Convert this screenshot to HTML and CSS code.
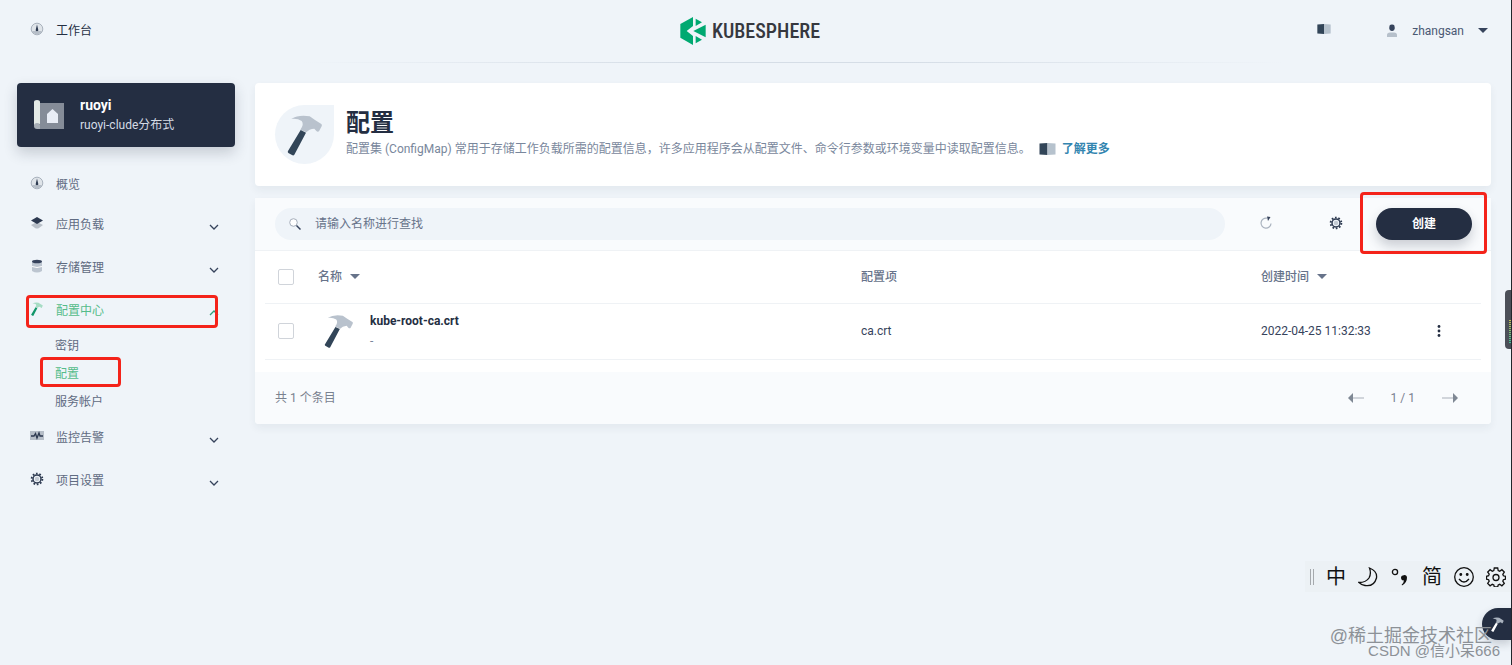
FILE: index.html
```html
<!DOCTYPE html>
<html lang="zh-CN">
<head>
<meta charset="utf-8">
<meta name="viewport" content="width=device-width, initial-scale=1">
<title>配置 - KubeSphere</title>
<link rel="stylesheet" href="styles.css">
</head>
<body>
<svg class="defs" aria-hidden="true">
  <symbol id="hammer" viewBox="0 0 108 124">
    <path class="hammer-head" d="M13 14Q35 0 68 6L84 17L103 29Q106 31 104 36L96 51Q92 54 88 50L82 43Q66 44 58 54L40 46Q52 30 44 20Q32 12 13 14Z"/>
    <path class="hammer-handle" d="M41 47L57 55L22 121Q19 125 15 122L4 116Q1 113 3 110Z"/>
  </symbol>
  <symbol id="gauge" viewBox="0 0 14 14">
    <circle cx="7" cy="7" r="5.8" fill="#dfe4e9" stroke="#a9b2bd" stroke-width="1"/>
    <path d="M2 9a5.500 5.500 0 0 0 10 0z" fill="#b6bec8"/>
    <path d="M7 2.500l1.200 5a1.300 1.300 0 1 1-2.400 0z" fill="#2c3950"/>
  </symbol>
  <symbol id="chevron" viewBox="0 0 10 6">
    <path d="M1 1l4 4 4-4" fill="none" stroke="#36435c" stroke-width="1.300"/>
  </symbol>
  <symbol id="caret" viewBox="0 0 10 5"><path d="M0 0h10L5 5z" fill="currentColor"/></symbol>
  <symbol id="book" viewBox="0 0 16 12">
    <path d="M0 .5L8 0v12l-8-.5z" fill="#324558"/><path d="M8 0l8 .5v11L8 12z" fill="#b6c2cd"/>
  </symbol>
  <symbol id="gear" viewBox="0 0 14 14">
    <circle cx="7" cy="7" r="5.400" fill="none" stroke="#2c3950" stroke-width="1.800" stroke-dasharray="1.697 1.697"/>
    <circle cx="7" cy="7" r="4" fill="#eff4f9" stroke="#2c3950" stroke-width="1.500"/>
    <circle cx="7" cy="7" r="2.200" fill="#c3cad3"/>
  </symbol>
</svg>

<header class="topbar">
  <a class="workbench" href="#"><svg class="nav-icon"><use href="#gauge"/></svg>工作台</a>
  <a class="logo" href="#">
    <svg viewBox="0 0 76 84" aria-hidden="true">
      <path d="M0 21L38 0V27L19 42L38 57V84L0 62Z M46 5L65 16L46 27Z M76 23V61L39 42Z M46 57L65 68L46 79Z" fill="#00a971"/>
    </svg>
    <span>KUBESPHERE</span>
  </a>
  <div class="account">
    <a class="docs" href="#" aria-label="文档"><svg><use href="#book"/></svg></a>
    <button class="user" type="button">
      <svg class="user-icon" viewBox="0 0 12 14"><rect x="3.300" y="0.500" width="5.400" height="6.500" rx="2.400" fill="#36435c"/><path d="M1 13V11Q1 8.500 4 8.500H8Q11 8.500 11 11V13Z" fill="#b6c0cb"/></svg>
      zhangsan
      <svg class="caret"><use href="#caret"/></svg>
    </button>
  </div>
</header>

<div class="layout">
  <aside class="sidebar">
    <a class="project" href="#">
      <svg viewBox="0 0 32 32" aria-hidden="true">
        <path d="M7 4h24v26H7z" fill="#858c98"/><path d="M1 3q0-2 3-2t3 2v22H4q-3 0-3 3z" fill="#e3e9e6"/>
        <path d="M1 27q0-3 3-3t3 2v4H4q-3 0-3-3z" fill="#a7aeb6"/>
        <path d="M14 15l5.500-5L25 15v9H14z" fill="#e9edf6"/>
      </svg>
      <span class="project-text"><strong>ruoyi</strong><span>ruoyi-clude分布式</span></span>
    </a>
    <nav>
      <ul class="menu">
        <li><a class="item first" href="#"><svg class="nav-icon"><use href="#gauge"/></svg>概览</a></li>
        <li><a class="item" href="#"><svg class="nav-icon" viewBox="0 0 14 14"><path d="M1 9l6-3 6 3-4 3q-2 1-4 0z" fill="#b9c0c9"/><path d="M7 1l6 3.500L7 8 1 4.500z" fill="#2c3950"/></svg>应用负载<svg class="chevron"><use href="#chevron"/></svg></a></li>
        <li><a class="item" href="#"><svg class="nav-icon" viewBox="0 0 14 14"><path d="M2 3h10v9q-5 3-10 0z" fill="#bcc5d0"/><path d="M2 7.500q5 2 10 0" fill="none" stroke="#fff"/><ellipse cx="7" cy="2.500" rx="5" ry="1.800" fill="#36435c"/></svg>存储管理<svg class="chevron"><use href="#chevron"/></svg></a></li>
        <li>
          <a class="item active marked" href="#"><svg class="nav-icon"><use href="#hammer"/></svg>配置中心<svg class="chevron" viewBox="0 0 10 6"><path d="M1 5l4-4 4 4" fill="none" stroke="#329f7a" stroke-width="1.300"/></svg></a>
          <ul class="submenu">
            <li><a href="#">密钥</a></li>
            <li><a class="active marked" href="#">配置</a></li>
            <li><a href="#">服务帐户</a></li>
          </ul>
        </li>
        <li><a class="item" href="#"><svg class="nav-icon" viewBox="0 0 14 14"><path d="M0 2h14v9H0z" fill="#b6bec8"/><path d="M1 7h3l1.500-2.500L7 9l2-5 1 3h3" fill="none" stroke="#2c3950" stroke-width="1.300"/></svg>监控告警<svg class="chevron"><use href="#chevron"/></svg></a></li>
        <li><a class="item" href="#"><svg class="nav-icon"><use href="#gear"/></svg>项目设置<svg class="chevron"><use href="#chevron"/></svg></a></li>
      </ul>
    </nav>
  </aside>

  <main class="content">
    <section class="banner card">
      <div class="banner-icon"><svg><use href="#hammer"/></svg></div>
      <div>
        <h1>配置</h1>
        <p>配置集 (ConfigMap) 常用于存储工作负载所需的配置信息，许多应用程序会从配置文件、命令行参数或环境变量中读取配置信息。<a class="more" href="#"><svg><use href="#book"/></svg>了解更多</a></p>
      </div>
    </section>

    <section class="card">
      <div class="toolbar">
        <label class="search">
          <svg viewBox="0 0 12 12" aria-hidden="true"><circle cx="4.500" cy="4.500" r="3.800" fill="#fff" stroke="#a5aebb"/><path d="M7.500 7.500l4 4" stroke="#36435c" stroke-width="1.500"/></svg>
          <input type="text" placeholder="请输入名称进行查找" aria-label="请输入名称进行查找">
        </label>
        <div class="tools">
          <button class="tool" type="button" aria-label="刷新"><svg viewBox="0 0 14 14"><path d="M8 2.200A5 5 0 1 0 12 7.500" fill="none" stroke="#aab3bf" stroke-width="1.200"/><path d="M8 0.500L11.500 1 9 5z" fill="#36435c"/></svg></button>
          <button class="tool" type="button" aria-label="自定义列"><svg><use href="#gear"/></svg></button>
        </div>
        <div class="create-wrap marked"><button class="create" type="button">创建</button></div>
      </div>
      <div class="table-wrap">
        <table>
          <colgroup><col class="c-check"><col class="c-name"><col class="c-config"><col><col class="c-menu"></colgroup>
          <thead>
            <tr>
              <th><input type="checkbox" aria-label="全选"></th>
              <th><button class="sort" type="button">名称<svg class="caret"><use href="#caret"/></svg></button></th>
              <th>配置项</th>
              <th><button class="sort" type="button">创建时间<svg class="caret"><use href="#caret"/></svg></button></th>
              <th></th>
            </tr>
          </thead>
          <tbody>
            <tr>
              <td><input type="checkbox" aria-label="选择 kube-root-ca.crt"></td>
              <td><div class="resource"><svg><use href="#hammer"/></svg><div><a href="#">kube-root-ca.crt</a><span>-</span></div></div></td>
              <td>ca.crt</td>
              <td>2022-04-25 11:32:33</td>
              <td><button class="dots" type="button" aria-label="更多操作"><svg viewBox="0 0 4 12"><circle cx="2" cy="1.500" r="1.400"/><circle cx="2" cy="6" r="1.400"/><circle cx="2" cy="10.500" r="1.400"/></svg></button></td>
            </tr>
          </tbody>
        </table>
      </div>
      <footer class="pager-bar">
        <span>共 1 个条目</span>
        <div class="pager">
          <button type="button" aria-label="上一页"><svg viewBox="0 0 16 10"><path d="M4 5h12" stroke="#c3c9cf" stroke-width="1.500"/><path d="M5 0v10L0 5z" fill="#7f8894"/></svg></button>
          <span>1 / 1</span>
          <button type="button" aria-label="下一页"><svg viewBox="0 0 16 10"><path d="M0 5h12" stroke="#c3c9cf" stroke-width="1.500"/><path d="M11 0v10l5-5z" fill="#7f8894"/></svg></button>
        </div>
      </footer>
    </section>
  </main>
</div>

<div class="meter" aria-hidden="true"><i></i></div>
<button class="toolbox" type="button" aria-label="工具箱"><svg><use href="#hammer"/></svg></button>
<div class="ime">
  <i class="grip"></i>
  <span>中</span>
  <svg viewBox="0 0 20 20"><path d="M11.500 1Q19.500 4 18.500 11Q16 20 7 18.500Q3.500 18 1 15.500Q8 15.500 11 11Q13.500 6.500 11.500 1Z"/></svg>
  <svg viewBox="0 0 20 20"><circle cx="5" cy="5" r="2.600"/><path d="M13 8.500a2.600 2.600 0 0 1 4 2Q17 16 12 18.500L11.700 17.500Q13.800 16 14 13.300a2.400 2.400 0 0 1-1-4.800" fill="#111" stroke="none"/></svg>
  <span>简</span>
  <svg viewBox="0 0 20 20"><circle cx="10" cy="10" r="9.300"/><path d="M5 12q5 6 10 0"/><circle cx="6.800" cy="7.500" r=".8" fill="#111"/><circle cx="13.200" cy="7.500" r=".8" fill="#111"/></svg>
  <svg viewBox="0 0 20 20"><path d="M8.300 1h3.400l.5 2.600 1.500.6 2.200-1.500 2.400 2.400-1.500 2.200.6 1.500 2.100.5v2.900l-2.100.5-.6 1.500 1.500 2.200-2.400 2.400-2.200-1.500-1.500.6-.5 2.100H8.300l-.5-2.100-1.500-.6-2.200 1.500-2.400-2.400 1.500-2.200-.6-1.500L.5 12.200V9.300l2.100-.6.6-1.500-1.500-2.100 2.400-2.400 2.200 1.500 1.500-.6z"/><circle cx="10" cy="10.500" r="3"/></svg>
</div>
<div class="credits"><span class="credit-a">@稀土掘金技术社区</span><span class="credit-b">CSDN @信小呆666</span></div>
</body>
</html>
```

FILE: styles.css
```css
* { box-sizing: border-box; }

body {
  position: relative;
  margin: 0;
  min-height: 100vh;
  background: #eff4f9;
  border-right: 1px solid #22262c;
  color: #242e42;
  font: 12px/20px Roboto, "Noto Sans CJK SC", sans-serif;
  overflow-x: hidden;
  --head: #b9c2cd;
  --handle: #324558;
}

a { color: inherit; text-decoration: none; }
button { padding: 0; border: 0; background: none; color: inherit; font: inherit; cursor: pointer; }
ul { margin: 0; padding: 0; list-style: none; }
svg { display: block; flex: none; }
.defs { position: absolute; width: 0; height: 0; }

.hammer-head { fill: var(--head); }
.hammer-handle { fill: var(--handle); }

.topbar {
  display: grid;
  grid-template-columns: 1fr auto 1fr;
  align-items: center;
  height: 63px;
  padding: 0 23px 2px 12px;
  background: linear-gradient(90deg, transparent 20%, #d5dde6 45%, #d5dde6 60%, transparent 85%) bottom / 100% 1px no-repeat;
}
.workbench { display: flex; align-items: center; padding: 1px 0 0 18px; }
.nav-icon { width: 14px; height: 14px; margin: 0 12px 4px 0; }
.logo { display: flex; align-items: center; gap: 6px; color: #36383f; }
.logo svg { width: 26px; height: 28px; }
.logo span { font: 500 20px/28px "Roboto Condensed", "Liberation Sans Narrow", "Open Sans Condensed", Roboto, sans-serif; }
.account { display: flex; align-items: center; justify-content: flex-end; gap: 55px; color: #4a5974; }
.docs svg { width: 14px; height: 10px; margin-bottom: 3px; }
.user { display: flex; align-items: center; }
.user-icon { width: 12px; height: 14px; margin-right: 14px; }
.caret { width: 10px; height: 5px; }
.user .caret { margin-left: 14px; color: #36435c; }

.layout { display: flex; gap: 20px; padding: 20px 20px 0 17px; }
.sidebar { flex: none; width: 218px; }
.project {
  display: flex;
  align-items: center;
  gap: 15px;
  height: 64px;
  padding: 0 16px;
  border-radius: 4px;
  background: #242e42;
  box-shadow: 0 6px 14px rgba(36, 46, 66, .2);
  color: #d5dbe5;
}
.project svg { width: 32px; height: 32px; }
.project-text { display: flex; flex-direction: column; }
.project strong { color: #fff; font-size: 14px; }

.menu { margin-top: 19px; color: #5f6b82; }
.item { position: relative; display: flex; align-items: center; height: 43px; padding: 1px 16px 0 13px; }
.item.first { height: 37px; padding-top: 0; }
.chevron { width: 10px; height: 6px; margin: 3px 0 0 auto; }
.submenu a { position: relative; display: flex; align-items: center; height: 28px; padding-left: 38px; }
.menu .active { color: #55bc8a; }
.item.active { --head: #a6dcc4; --handle: #12966a; }

.marked::after {
  content: "";
  position: absolute;
  border: 3px solid #f4231a;
  border-radius: 4px;
  pointer-events: none;
}
.item.marked::after { inset: 6px 17px 4px 9px; }
.submenu .marked::after { inset: -3px 114px 1px 23px; }

.content { flex: 1; min-width: 0; display: flex; flex-direction: column; gap: 12px; }
.card { border-radius: 4px; background: #fff; box-shadow: 0 4px 8px rgba(36, 46, 66, .06); }
.banner { display: flex; gap: 12px; padding: 22px 20px; }
.banner-icon {
  display: flex;
  align-items: center;
  justify-content: center;
  width: 59px;
  height: 59px;
  border-radius: 50% 0 50% 50%;
  background: #eff4f9;
}
.banner-icon svg { width: 36px; height: 42px; }
h1 { margin: 2px 0 0; font-size: 24px; line-height: 32px; }
.banner p { display: flex; align-items: center; margin: 0; color: #79879c; }
.more { display: inline-flex; align-items: center; gap: 6px; margin-left: 8px; color: #3385b0; font-weight: bold; }
.more svg { width: 17px; height: 12px; }

.toolbar { display: flex; align-items: center; height: 53px; padding: 0 19px 0 20px; border-bottom: 1px solid #eff2f5; background: #f9fbfd; }
.search { flex: 1; display: flex; align-items: center; gap: 14px; height: 32px; padding: 0 14px; border-radius: 16px; background: #eff4f9; }
.search svg { width: 12px; height: 12px; }
.search input { flex: 1; min-width: 0; padding: 0; border: 0; outline: 0; background: none; font: inherit; color: #242e42; }
.search input::placeholder { color: #67738a; opacity: 1; }
.tools { display: flex; gap: 56px; margin: 0 33px 3px 34px; }
.tool svg { width: 14px; height: 14px; }
.create-wrap { position: relative; }
.create-wrap.marked::after { inset: -16px -15px -14px -16px; }
.create {
  display: block;
  width: 96px;
  height: 32px;
  border-radius: 16px;
  background: #242e42;
  box-shadow: 0 6px 12px rgba(36, 46, 66, .22);
  color: #fff;
  font-weight: bold;
}

.table-wrap { padding: 0 10px 12px; }
table { width: 100%; border-collapse: collapse; table-layout: fixed; }
.c-check { width: 53px; }
.c-name { width: 44.65%; }
.c-config { width: 32.9%; }
.c-menu { width: 52px; }
th, td { padding: 0; text-align: left; border-bottom: 1px solid #eff2f5; }
th { height: 52px; color: #67738a; font-weight: 500; }
td { height: 56px; color: #36435c; }
.sort { display: flex; align-items: center; gap: 8px; }
input[type="checkbox"] {
  display: block;
  appearance: none;
  width: 16px;
  height: 16px;
  margin: 0 0 0 13px;
  border: 1px solid #d0d4da;
  border-radius: 2px;
  background: #fff;
}
.resource { display: flex; align-items: center; gap: 16px; padding-left: 6px; }
.resource svg { width: 30px; height: 34px; }
.resource div { display: flex; flex-direction: column; }
.resource a { color: #242e42; font-weight: bold; }
.resource span { color: #79879c; }
.dots { display: block; padding: 4px 8px; }
.dots svg { width: 4px; height: 12px; fill: #242e42; }

.pager-bar { display: flex; align-items: center; justify-content: space-between; height: 52px; padding: 0 33px 0 20px; border-radius: 0 0 4px 4px; background: #f9fbfd; color: #79818f; }
.pager { display: flex; align-items: center; gap: 27px; }
.pager svg { width: 16px; height: 10px; }

.meter { position: absolute; top: 290px; right: -1px; width: 7px; height: 59px; padding: 30px 0 6px 4px; border-radius: 4px 0 0 4px; background: #4b4f58; }
.meter i { display: block; height: 100%; background: repeating-linear-gradient(transparent 0 1px, #4b4f58 1px 2px), linear-gradient(#c9bf52, #3fc29a); }

.toolbox { position: absolute; right: 0; bottom: 25px; width: 29px; height: 32px; padding-left: 9px; border-radius: 16px 0 0 16px; background: #242e42; box-shadow: 0 4px 8px rgba(36, 46, 66, .2); --head: #a9b2be; --handle: #fff; }
.toolbox svg { width: 13px; height: 15px; }

.ime { position: absolute; right: 0; bottom: 73px; display: flex; align-items: center; gap: 12px; height: 31px; padding: 0 5px; background: #ecf1f5; color: #111; font-size: 20px; }
.ime svg { width: 20px; height: 20px; fill: none; stroke: #111; stroke-width: 1.300; }
.grip { width: 4px; height: 16px; border: 1px solid #a5a9ad; border-width: 0 1px; }

.credits { position: absolute; right: 11px; bottom: 4px; display: grid; color: #8c9197; font-family: "Liberation Sans", "Noto Sans CJK SC", sans-serif; pointer-events: none; }
.credits span { grid-area: 1 / 1; white-space: nowrap; }
.credit-a { padding: 0 8px 15px 0; font-size: 18px; }
.credit-b { align-self: end; justify-self: end; font-size: 15px; }
```
